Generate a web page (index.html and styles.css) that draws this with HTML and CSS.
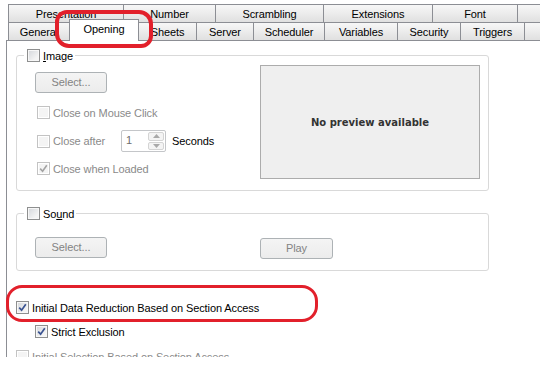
FILE: index.html
```html
<!DOCTYPE html>
<html lang="en">
<head>
    <meta charset="UTF-8">
    <title>Document Properties - Opening</title>
    <link rel="stylesheet" href="styles.css">
</head>
<body>
<div class="shot">
    <div class="tabs">
        <div class="tab-row">
            <div class="tab w-pres">Presentation</div>
            <div class="tab w-num">Number</div>
            <div class="tab w-scr">Scrambling</div>
            <div class="tab w-ext">Extensions</div>
            <div class="tab w-font">Font</div>
            <div class="tab w-more"></div>
        </div>
        <div class="tab-row front">
            <div class="tab w-gen">General</div>
            <div class="tab active w-open">Opening</div>
            <div class="tab w-sheets">Sheets</div>
            <div class="tab w-server">Server</div>
            <div class="tab w-sched">Scheduler</div>
            <div class="tab w-vars">Variables</div>
            <div class="tab w-sec">Security</div>
            <div class="tab w-trig">Triggers</div>
            <div class="tab w-more"></div>
        </div>
    </div>

    <div class="panel">
        <fieldset class="group image-group">
            <legend><span class="cb"></span><span><u>I</u>mage</span></legend>
            <div class="group-body">
                <div class="image-opts">
                    <div class="btn">Select...</div>
                    <div class="opt first">
                        <span class="cb off"></span>
                        <span class="lbl dim">Close on Mouse Click</span>
                    </div>
                    <div class="opt close-after">
                        <span class="cb off"></span>
                        <span class="lbl dim after-lbl">Close after</span>
                        <div class="spin">
                            <span class="spin-val">1</span>
                            <div class="spin-btns">
                                <span class="spin-btn"><svg width="7" height="4" viewBox="0 0 7 4"><path d="M0 4 L3.5 0 L7 4 Z" fill="#a9a9a9"/></svg></span>
                                <span class="spin-btn"><svg width="7" height="4" viewBox="0 0 7 4"><path d="M0 0 L3.5 4 L7 0 Z" fill="#a9a9a9"/></svg></span>
                            </div>
                        </div>
                        <span class="lbl seconds">Seconds</span>
                    </div>
                    <div class="opt loaded">
                        <span class="cb off"><svg width="9" height="9" viewBox="0 0 9 9"><path d="M1.2 4.6 L3.6 7.2 L7.8 1.2" fill="none" stroke="#a3a3a3" stroke-width="1.6"/></svg></span>
                        <span class="lbl dim">Close when Loaded</span>
                    </div>
                </div>
                <div class="preview">No preview available</div>
            </div>
        </fieldset>

        <fieldset class="group sound-group">
            <legend><span class="cb"></span><span>So<u>u</u>nd</span></legend>
            <div class="group-body">
                <div class="btn select-sound">Select...</div>
                <div class="btn play">Play</div>
            </div>
        </fieldset>

        <div class="opt reduction">
            <span class="cb"><svg width="9" height="9" viewBox="0 0 9 9"><path d="M1.2 4.6 L3.6 7.2 L7.8 1.2" fill="none" stroke="#3a5391" stroke-width="1.7"/></svg></span>
            <span class="lbl">Initial Data Reduction Based on Section Access</span>
        </div>
        <div class="opt strict">
            <span class="cb"><svg width="9" height="9" viewBox="0 0 9 9"><path d="M1.2 4.6 L3.6 7.2 L7.8 1.2" fill="none" stroke="#3a5391" stroke-width="1.7"/></svg></span>
            <span class="lbl">Strict Exclusion</span>
        </div>
        <div class="opt selection">
            <span class="cb off"></span>
            <span class="lbl dim">Initial Selection Based on Section Access</span>
        </div>
    </div>

    <div class="mark mark-tab"></div>
    <div class="mark mark-reduction"></div>
</div>
</body>
</html>
```
FILE: styles.css
```css
body {
    margin: 0;
    background: #fff;
    font-family: "Liberation Sans", Arial, sans-serif;
    font-size: 11px;
    letter-spacing: -0.1px;
    color: #000;
}
.shot {
    position: relative;
    width: 540px;
    height: 357px;
    overflow: hidden;
    background: #fff;
}

/* tabs */
.tabs {
    height: 40px;
    padding: 4px 0 0 8px;
    box-sizing: border-box;
}
.tab-row {
    display: flex;
    height: 18px;
}
.tab {
    box-sizing: border-box;
    height: 18px;
    margin-right: -1px;
    border: 1px solid #8c8e94;
    border-bottom: none;
    background: linear-gradient(#f7f7f7, #ededed 45%, #e0e0e0);
    text-align: center;
    line-height: 18px;
    white-space: nowrap;
    flex: none;
}
.tab.active {
    position: relative;
    z-index: 2;
    height: 22px;
    margin-top: -3px;
    background: #fff;
    line-height: 19px;
}
.w-pres { width: 116px; }
.w-num { width: 93px; }
.w-scr { width: 109px; }
.w-ext { width: 110px; }
.w-font { width: 86px; }
.w-more { width: 40px; }
.w-gen { width: 62px; }
.w-open { width: 70px; }
.w-sheets { width: 59px; }
.w-server { width: 58px; }
.w-sched { width: 72px; }
.w-vars { width: 74px; }
.w-sec { width: 64px; }
.w-trig { width: 65px; }

/* page */
.panel {
    margin-left: 6px;
    height: 400px;
    border-top: 1px solid #8c8e94;
    border-left: 1px solid #8c8e94;
    padding: 7px 0 0 9px;
}
.group {
    box-sizing: border-box;
    width: 473px;
    margin: 0;
    min-width: 0;
    border: 1px solid #d9d9d9;
    border-radius: 3px;
    padding: 0 8px 11px 7px;
}
.group legend {
    display: flex;
    align-items: center;
    gap: 3px;
    height: 15px;
    padding: 0 2px 0 3px;
}
.group-body {
    display: flex;
    align-items: flex-start;
}
.sound-group {
    margin-top: 15px;
}

/* checkboxes */
.cb {
    box-sizing: border-box;
    width: 13px;
    height: 13px;
    flex: none;
    display: flex;
    align-items: center;
    justify-content: center;
    border: 1px solid #8e8f8f;
    background: linear-gradient(135deg, #d3d6da, #f4f4f4 75%);
    box-shadow: inset 0 0 0 1px #f7f7f7;
}
.cb.off {
    border-color: #c3c3c3;
    background: #f4f4f4;
    box-shadow: inset 0 0 0 1px #fff;
}
.opt {
    display: flex;
    align-items: center;
    height: 15px;
}
.lbl {
    margin-left: 3px;
    white-space: nowrap;
}
.dim {
    color: #8a8a8a;
}

/* image options */
.image-opts {
    margin: 9px 0 0 11px;
}
.image-opts .opt {
    margin-left: 2px;
}
.image-opts .first {
    margin-top: 12px;
}
.image-opts .close-after {
    height: 22px;
    margin-top: 10px;
}
.image-opts .loaded {
    margin-top: 9px;
}
.after-lbl {
    width: 68px;
}
.spin {
    box-sizing: border-box;
    display: flex;
    width: 45px;
    height: 22px;
    border: 1px solid #c4c6c9;
    border-radius: 2px;
    background: #fff;
}
.spin-val {
    flex: 1;
    padding-left: 4px;
    line-height: 18px;
    color: #6d6d6d;
}
.spin-btns {
    display: flex;
    flex-direction: column;
    width: 16px;
    padding: 1px 1px 1px 0;
    gap: 1px;
}
.spin-btn {
    flex: 1;
    display: flex;
    align-items: center;
    justify-content: center;
    border: 1px solid #d4d4d4;
    border-radius: 2px;
    background: #f4f4f4;
}
.seconds {
    margin-left: 6px;
}

.btn {
    box-sizing: border-box;
    width: 72px;
    height: 21px;
    border: 1px solid #adb2b5;
    border-radius: 3px;
    background: linear-gradient(#f4f4f4, #ececec);
    color: #838383;
    text-align: center;
    line-height: 19px;
}
.preview {
    box-sizing: border-box;
    width: 220px;
    height: 114px;
    margin: 2px 0 0 auto;
    border: 1px solid #acacac;
    background: #efefef;
    display: flex;
    align-items: center;
    justify-content: center;
    font-family: "DejaVu Sans", Verdana, sans-serif;
    font-size: 10px;
    font-weight: bold;
    letter-spacing: 0;
    color: #333;
}

/* sound */
.sound-group .group-body {
    margin-top: 16px;
}
.select-sound {
    margin-left: 11px;
}
.play {
    width: 73px;
    margin: 1px 0 0 153px;
}

/* section access */
.reduction {
    margin-top: 29px;
}
.strict {
    margin: 9px 0 0 19px;
}
.selection {
    margin-top: 10px;
}

/* red annotations drawn over the screenshot */
.mark {
    position: absolute;
    box-sizing: border-box;
    border: 4px solid #e2202b;
    pointer-events: none;
}
.mark-tab {
    left: 55px;
    top: 10px;
    width: 98px;
    height: 38px;
    border-radius: 12px 14px 12px 14px;
}
.mark-reduction {
    left: 6px;
    top: 285px;
    width: 312px;
    height: 37px;
    border-width: 3.5px;
    border-radius: 16px;
}
```
